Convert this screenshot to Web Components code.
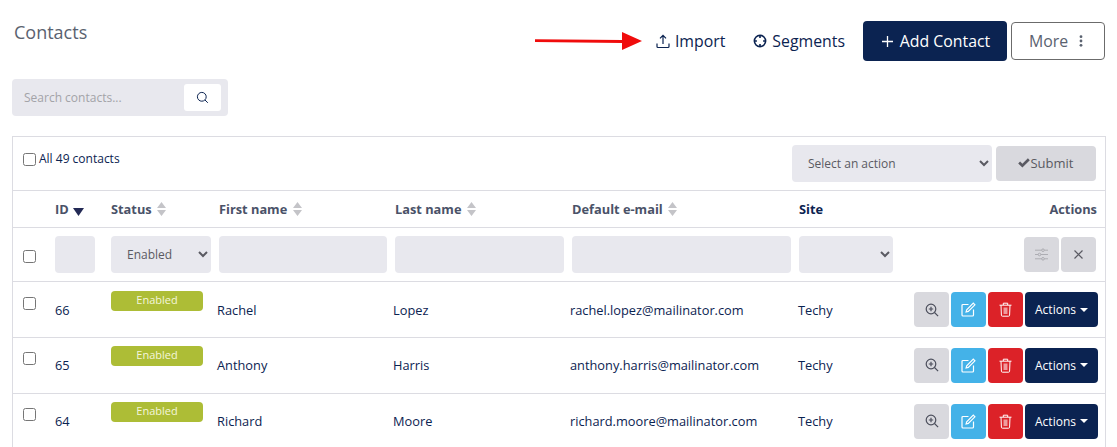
<!DOCTYPE html>
<html>
<head>
<meta charset="utf-8">
<title>Contacts</title>
<style>
  html, body { margin: 0; height: 100%; overflow: hidden; background: #fff; }
  body { font-family: "Open Sans", sans-serif; color: #0b2351; }
</style>
</head>
<body>
<contacts-page></contacts-page>
<script>
const ICONS = {
  upload: `<svg width="14" height="15" viewBox="0 0 14 15" fill="none" stroke="currentColor" stroke-width="1.2"><path d="M7 10V1.5M4 4.300 7 1.300l3 3M1 9.500v3a1 1 0 0 0 1 1h10a1 1 0 0 0 1-1v-3"/></svg>`,
  target: `<svg width="15" height="15" viewBox="0 0 15 15" fill="none" stroke="currentColor"><circle cx="7.500" cy="7.500" r="6" stroke-width="1.700"/><path d="M7.500 1v3.200M7.500 10.800V14M1 7.500h3.200M10.800 7.500H14" stroke-width="1.700"/></svg>`,
  plus: `<svg width="11" height="11" viewBox="0 0 11 11" stroke="currentColor" stroke-width="1.300"><path d="M5.500 0v11M0 5.500h11"/></svg>`,
  dots: `<svg width="4" height="12" viewBox="0 0 4 12" fill="currentColor"><circle cx="2" cy="1.700" r="1.400"/><circle cx="2" cy="6" r="1.400"/><circle cx="2" cy="10.300" r="1.400"/></svg>`,
  search: `<svg width="13" height="13" viewBox="0 0 13 13" fill="none" stroke="currentColor" stroke-width="1"><circle cx="5.800" cy="5.800" r="4.400"/><path d="m9 9 2.800 2.800"/></svg>`,
  zoom: `<svg width="14" height="14" viewBox="0 0 14 14" fill="none" stroke="currentColor" stroke-width="1.200"><circle cx="6" cy="6" r="4.800"/><path d="m9.500 9.500 3.600 3.600M6 3.800v4.400M3.800 6h4.400"/></svg>`,
  edit: `<svg width="15" height="15" viewBox="0 0 15 15" fill="none" stroke="currentColor" stroke-width="1.200"><path d="M7.500 2.500H2a1 1 0 0 0-1 1V13a1 1 0 0 0 1 1h9.500a1 1 0 0 0 1-1V7.500"/><path d="M12.300 1.200l1.600 1.600-6.600 6.600-2.200.6.6-2.200z"/></svg>`,
  trash: `<svg width="13" height="15" viewBox="0 0 13 15" fill="none" stroke="currentColor" stroke-width="1"><path d="M.5 3.200h12M4.300 3V1.200h4.400V3M2 3.200l.4 10a1 1 0 0 0 1 1h6.200a1 1 0 0 0 1-1l.4-10"/><path d="M4.500 5.500h4v6.500h-4z" fill="currentColor" fill-opacity=".55" stroke="none"/></svg>`,
  sliders: `<svg width="13" height="13" viewBox="0 0 13 13" fill="none" stroke="currentColor" stroke-width=".9"><path d="M0 2.200h13M0 6.500h13M0 10.800h13"/><circle cx="8" cy="2.200" r="1.300" fill="#d9d9de"/><circle cx="4.500" cy="6.500" r="1.300" fill="#d9d9de"/><circle cx="8" cy="10.800" r="1.300" fill="#d9d9de"/></svg>`,
  close: `<svg width="9" height="9" viewBox="0 0 9 9" stroke="currentColor" stroke-width="1.200"><path d="m.5.5 8 8M8.500.5l-8 8"/></svg>`,
  check: `<svg width="12" height="10" viewBox="0 0 12 10" fill="currentColor"><path d="M4.400 9.600.2 5.400l1.900-1.900 2.300 2.300L9.900.3l1.900 1.900z"/></svg>`
};

// same columns for head, filter and data rows
const COLUMNS = "42px 56px 108px 176px 177px 227px 1fr auto";

class IconButton extends HTMLElement {
  constructor() {
    super();
    this.attachShadow({ mode: "open" });
    const icon = ICONS[this.getAttribute("icon")];
    this.shadowRoot.innerHTML = `
      <style>
        :host { display: flex; align-items: center; justify-content: center; width: 35px; height: 35px;
          border-radius: 4px; background: var(--bg, #d9d9de); color: var(--fg, #4c4f5c); }
        svg { display: block; }
      </style>${icon}`;
  }
}
customElements.define("icon-button", IconButton);

class TopBar extends HTMLElement {
  constructor() {
    super();
    this.attachShadow({ mode: "open" });
    this.shadowRoot.innerHTML = `
      <style>
        :host { display: flex; align-items: center; height: 40px; padding: 21px 12px 0 14px; font-size: 15.85px; color: #0b2351; }
        h1 { margin: -19px auto 0 0; font-size: 18px; line-height: 24px; font-weight: 400; color: #5a6270; }
        .link { display: flex; align-items: center; gap: 5px; }
        .arrow { display: block; margin-right: 13px; }
        .import { margin-right: 28px; }
        .segments { margin-right: 18px; }
        .segments svg { width: 14px; height: 14px; }
        .add { display: flex; align-items: center; justify-content: center; gap: 7px; box-sizing: border-box; width: 144px; height: 40px; padding-left: 2px;
          border-radius: 4px; background: #0b2351; color: #fff; margin-right: 4px; }
        .more { display: flex; align-items: center; gap: 11px; box-sizing: border-box; width: 94px; height: 38px; padding-left: 17px;
          border: 1px solid #6b6b6b; border-radius: 4px; color: #5a6270; }
      </style>
      <h1>Contacts</h1>
      <svg class="arrow" width="108" height="20" viewBox="0 0 108 20"><path d="M0 8.200 87 9V1L107 10 87 19V12L0 11z" fill="#f00c0c"/></svg>
      <span class="link import">${ICONS.upload}<span>Import</span></span>
      <span class="link segments">${ICONS.target}<span>Segments</span></span>
      <span class="add">${ICONS.plus}<span>Add Contact</span></span>
      <span class="more"><span>More</span>${ICONS.dots}</span>`;
  }
}
customElements.define("top-bar", TopBar);

class SearchBox extends HTMLElement {
  constructor() {
    super();
    this.attachShadow({ mode: "open" });
    this.shadowRoot.innerHTML = `
      <style>
        :host { display: flex; align-items: center; justify-content: space-between; box-sizing: border-box; width: 216px; height: 37px;
          margin: 18px 0 20px 12px; padding: 0 7px 0 12px; border-radius: 4px; background: #e8e8ee; font-size: 12px; color: #a3a3a8; }
        .btn { display: flex; align-items: center; justify-content: center; width: 37px; height: 27px; border-radius: 3px; background: #fff; color: #0b2351; }
      </style>
      <span>Search contacts...</span>
      <span class="btn">${ICONS.search}</span>`;
  }
}
customElements.define("search-box", SearchBox);

const BOX_STYLE = `
  input[type=checkbox] { width: 13px; height: 13px; margin: 0; display: block; }
  select, .field { box-sizing: border-box; height: 37px; border: 0; border-radius: 4px; background-color: #e8e8ee;
    font: 12px "Open Sans", sans-serif; color: #5a5a62; }
  select { padding: 0 0 0 12px; outline: 0; }
`;

class BulkBar extends HTMLElement {
  constructor() {
    super();
    this.attachShadow({ mode: "open" });
    this.shadowRoot.innerHTML = `
      <style>${BOX_STYLE}
        :host { display: flex; box-sizing: border-box; height: 54px; padding: 8px 9px 0 10px; border-bottom: 1px solid #dcdce2; font-size: 12px; color: #0b2351; }
        label { display: flex; align-items: center; gap: 3px; height: 28px; margin-right: auto; }
        label span { margin-top: -2px; }
        select { width: 200px; margin-right: 4px; }
        .submit { display: flex; align-items: center; justify-content: center; box-sizing: border-box; width: 100px; height: 35px; margin-top: 1px; padding-bottom: 2px;
          border-radius: 4px; background: #d9d9de; font-size: 13px; color: #5a5a62; }
      </style>
      <label><input type="checkbox"><span>All 49 contacts</span></label>
      <select><option>Select an action</option></select>
      <span class="submit">${ICONS.check}<span>Submit</span></span>`;
  }
}
customElements.define("bulk-bar", BulkBar);

class SortHead extends HTMLElement {
  constructor() {
    super();
    this.attachShadow({ mode: "open" });
    const active = this.hasAttribute("active");
    const mark = active
      ? `<svg width="11" height="8" viewBox="0 0 11 8" style="margin:6px 0 0 -1px"><path d="M0 0h11L5.500 8z" fill="#232a55"/></svg>`
      : `<svg width="9" height="14" viewBox="0 0 9 14" fill="#c4c4c8"><path d="M4.500 0 9 6H0zM4.500 14 0 8h9z"/></svg>`;
    this.shadowRoot.innerHTML = `
      <style>
        :host { display: flex; align-items: center; gap: 5.5px; font-size: 12.8px; font-weight: 700; color: #4a5268; }
        svg { display: block; }
      </style>
      <slot></slot>${mark}`;
  }
}
customElements.define("sort-head", SortHead);

class HeadRow extends HTMLElement {
  constructor() {
    super();
    this.attachShadow({ mode: "open" });
    this.shadowRoot.innerHTML = `
      <style>
        :host { display: grid; grid-template-columns: ${COLUMNS}; align-items: center; box-sizing: border-box; height: 37px; border-bottom: 1px solid #dcdce2; }
        .site { color: #0b2351; font-size: 12.8px; font-weight: 700; }
        .actions { padding-right: 8px; color: #4a5268; font-size: 12.8px; font-weight: 700; }
      </style>
      <span></span>
      <sort-head active>ID</sort-head>
      <sort-head>Status</sort-head>
      <sort-head>First name</sort-head>
      <sort-head>Last name</sort-head>
      <sort-head>Default e-mail</sort-head>
      <span class="site">Site</span>
      <span class="actions">Actions</span>`;
  }
}
customElements.define("head-row", HeadRow);

class FilterRow extends HTMLElement {
  constructor() {
    super();
    this.attachShadow({ mode: "open" });
    this.shadowRoot.innerHTML = `
      <style>${BOX_STYLE}
        :host { display: grid; grid-template-columns: ${COLUMNS}; align-items: center; box-sizing: border-box; height: 54px; border-bottom: 1px solid #dcdce2; }
        input[type=checkbox] { margin: 4px 0 0 10px; }
        .status { width: 100px; padding-left: 12px; }
        .site { width: 94px; }
        .btns { display: flex; gap: 2px; padding-right: 9px; --fg: #5a5a62; }
        .sliders { --fg: #a8a8ae; }
      </style>
      <input type="checkbox">
      <span class="field" style="width:40px"></span>
      <select class="status"><option>Enabled</option></select>
      <span class="field" style="width:168px"></span>
      <span class="field" style="width:169px"></span>
      <span class="field" style="width:219px"></span>
      <select class="site"><option></option></select>
      <div class="btns">
        <icon-button class="sliders" icon="sliders"></icon-button>
        <icon-button icon="close"></icon-button>
      </div>`;
  }
}
customElements.define("filter-row", FilterRow);

class ContactRow extends HTMLElement {
  constructor() {
    super();
    this.attachShadow({ mode: "open" });
    const a = n => this.getAttribute(n);
    this.shadowRoot.innerHTML = `
      <style>${BOX_STYLE}
        :host { display: grid; grid-template-columns: ${COLUMNS}; align-items: center; box-sizing: border-box; height: 55.8px; padding-top: .5px; border-bottom: 1px solid #dcdce2;
          font-size: 12.8px; color: #0b2351; }
        input[type=checkbox] { margin: -13px 0 0 10px; }
        .badge { display: block; box-sizing: border-box; width: 92px; height: 20px; margin-top: -18px; border-radius: 4px; background: #adbd36;
          color: #f4f6dc; font-size: 11px; line-height: 18px; text-align: center; }
        .txt { margin-left: -2px; }
        .site { margin-left: -1px; }
        .btns { display: flex; gap: 2px; padding-right: 7px; }
        .view { --fg: #4c4f5c; }
        .edit { --bg: #44b2e8; --fg: #fff; }
        .del { --bg: #dc2228; --fg: #fff; }
        .menu { display: flex; align-items: center; justify-content: center; gap: 4px; width: 73px; height: 35px; border-radius: 4px;
          background: #0b2351; color: #fff; font-size: 12px; }
        .menu i { border: 4px solid transparent; border-top-color: #fff; border-bottom: 0; }
      </style>
      <input type="checkbox">
      <span class="id">${a("cid")}</span>
      <span class="badge">Enabled</span>
      <span class="txt">${a("first")}</span>
      <span class="txt">${a("last")}</span>
      <span class="txt">${a("email")}</span>
      <span class="site">${a("site")}</span>
      <div class="btns">
        <icon-button class="view" icon="zoom"></icon-button>
        <icon-button class="edit" icon="edit"></icon-button>
        <icon-button class="del" icon="trash"></icon-button>
        <span class="menu">Actions<i></i></span>
      </div>`;
  }
}
customElements.define("contact-row", ContactRow);

class ContactsTable extends HTMLElement {
  constructor() {
    super();
    this.attachShadow({ mode: "open" });
    this.shadowRoot.innerHTML = `
      <style>
        :host { display: block; box-sizing: border-box; width: 1094px; margin-left: 12px; border: 1px solid #dcdce2; }
      </style>
      <slot></slot>`;
  }
}
customElements.define("contacts-table", ContactsTable);

class ContactsPage extends HTMLElement {
  constructor() {
    super();
    this.attachShadow({ mode: "open" });
    this.shadowRoot.innerHTML = `
      <style>
        :host { display: block; font-family: "Open Sans", sans-serif; }
      </style>
      <top-bar></top-bar>
      <search-box></search-box>
      <contacts-table>
        <bulk-bar></bulk-bar>
        <head-row></head-row>
        <filter-row></filter-row>
        <contact-row cid="66" first="Rachel" last="Lopez" email="rachel.lopez@mailinator.com" site="Techy"></contact-row>
        <contact-row cid="65" first="Anthony" last="Harris" email="anthony.harris@mailinator.com" site="Techy"></contact-row>
        <contact-row cid="64" first="Richard" last="Moore" email="richard.moore@mailinator.com" site="Techy"></contact-row>
      </contacts-table>`;
  }
}
customElements.define("contacts-page", ContactsPage);
</script>
</body>
</html>
